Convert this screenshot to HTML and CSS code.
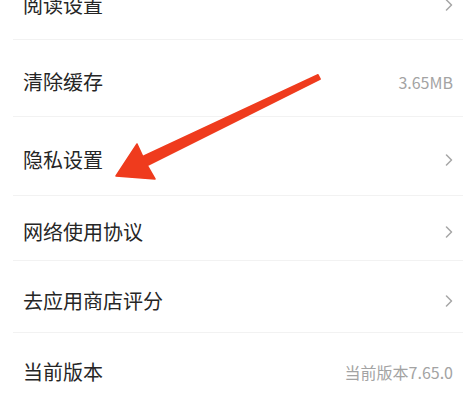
FILE: index.html
```html
<!DOCTYPE html>
<html lang="zh-CN">
<head>
<meta charset="utf-8">
<title>设置</title>
<link rel="stylesheet" href="styles.css">
</head>
<body>
<div class="page">
  <ul class="list">
    <li class="row row-0"><span class="label">阅读设置</span><span class="chev"><svg viewBox="0 0 8 12" width="8" height="12"><path d="M1.5 1 L6.5 6 L1.5 11" /></svg></span></li>
    <li class="row row-1"><span class="label">清除缓存</span><span class="value">3.65MB</span></li>
    <li class="row row-2"><span class="label">隐私设置</span><span class="chev"><svg viewBox="0 0 8 12" width="8" height="12"><path d="M1.5 1 L6.5 6 L1.5 11" /></svg></span></li>
    <li class="row row-3"><span class="label">网络使用协议</span><span class="chev"><svg viewBox="0 0 8 12" width="8" height="12"><path d="M1.5 1 L6.5 6 L1.5 11" /></svg></span></li>
    <li class="row row-4"><span class="label">去应用商店评分</span><span class="chev"><svg viewBox="0 0 8 12" width="8" height="12"><path d="M1.5 1 L6.5 6 L1.5 11" /></svg></span></li>
    <li class="row row-5 last"><span class="label">当前版本</span><span class="value">当前版本7.65.0</span></li>
  </ul>
  <svg class="arrow" viewBox="0 0 469 395" width="469" height="395">
    <polygon points="116,176 137,144 142.8,156.5 318,74.8 320.2,79.2 147.2,165.5 155,179" />
  </svg>
</div>
</body>
</html>
```

FILE: styles.css
```css
* { box-sizing: border-box; }
html, body { margin: 0; padding: 0; background: #ffffff; }
body {
  font-family: "Noto Sans CJK SC", "Noto Sans", sans-serif;
  color: #222222;
}
.page {
  position: relative;
  width: 469px;
  height: 395px;
  overflow: hidden;
  background: #ffffff;
}
.list {
  list-style: none;
  margin: -38px 0 0 0;
  padding: 0 6px 0 13px;
}
.row {
  display: flex;
  align-items: center;
  justify-content: space-between;
  padding: 8px 10px 0 10px;
  border-bottom: 1px solid #f2f2f2;
}
.row.last { border-bottom: none; }
.row-0 { height: 78px; }
.row-1 { height: 77px; }
.row-2 { height: 79px; }
.row-3 { height: 65px; }
.row-4 { height: 72px; }
.row-5 { height: 70px; }
.label {
  font-size: 20px;
  line-height: 24px;
  color: #262626;
}
.value {
  font-size: 16px;
  line-height: 20px;
  color: #a3a3a3;
}
.chev {
  display: flex;
  align-items: center;
}
.chev svg path {
  fill: none;
  stroke: #a6a6a6;
  stroke-width: 1.5;
  stroke-linecap: round;
  stroke-linejoin: round;
}
.arrow {
  position: absolute;
  left: 0;
  top: 0;
}
.arrow polygon {
  fill: #ef3b1d;
  stroke: #ef3b1d;
  stroke-width: 1.5;
  stroke-linejoin: round;
}
```
